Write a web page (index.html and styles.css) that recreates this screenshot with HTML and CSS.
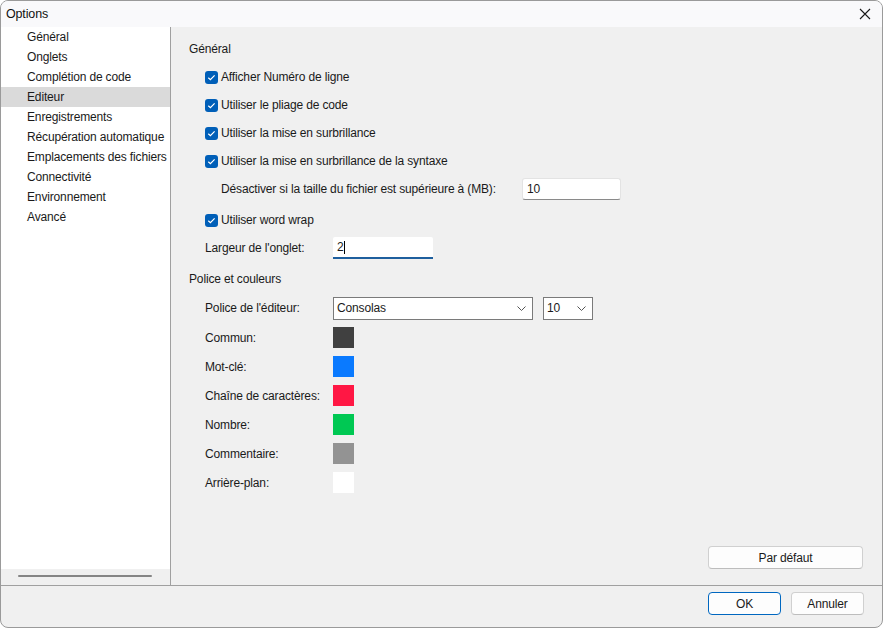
FILE: index.html
```html
<!DOCTYPE html>
<html lang="fr">
<head>
<meta charset="utf-8">
<title>Options</title>
<link rel="stylesheet" href="styles.css">
</head>
<body>
<div class="window">
  <div class="titlebar">
    <span class="title">Options</span>
    <svg class="close" width="12" height="12" viewBox="0 0 12 12"><path d="M1 1 L11 11 M11 1 L1 11" stroke="#1a1a1a" stroke-width="1.1" fill="none"/></svg>
  </div>
  <div class="main">
    <div class="sidebar">
      <ul class="nav">
        <li>Général</li>
        <li>Onglets</li>
        <li>Complétion de code</li>
        <li class="active">Editeur</li>
        <li>Enregistrements</li>
        <li>Récupération automatique</li>
        <li>Emplacements des fichiers</li>
        <li>Connectivité</li>
        <li>Environnement</li>
        <li>Avancé</li>
      </ul>
      <div class="hscroll"><div class="thumb"></div></div>
    </div>
    <div class="content">
      <div class="heading first">Général</div>
      <div class="row check"><span class="cb"><svg viewBox="0 0 13 13" width="13" height="13"><path d="M3.3 6.7 L5.4 8.7 L9.6 4.4" stroke="#fff" stroke-width="1.2" fill="none"/></svg></span>Afficher Numéro de ligne</div>
      <div class="row check"><span class="cb"><svg viewBox="0 0 13 13" width="13" height="13"><path d="M3.3 6.7 L5.4 8.7 L9.6 4.4" stroke="#fff" stroke-width="1.2" fill="none"/></svg></span>Utiliser le pliage de code</div>
      <div class="row check"><span class="cb"><svg viewBox="0 0 13 13" width="13" height="13"><path d="M3.3 6.7 L5.4 8.7 L9.6 4.4" stroke="#fff" stroke-width="1.2" fill="none"/></svg></span>Utiliser la mise en surbrillance</div>
      <div class="row check"><span class="cb"><svg viewBox="0 0 13 13" width="13" height="13"><path d="M3.3 6.7 L5.4 8.7 L9.6 4.4" stroke="#fff" stroke-width="1.2" fill="none"/></svg></span>Utiliser la mise en surbrillance de la syntaxe</div>
      <div class="row sub">
        <span class="sublabel">Désactiver si la taille du fichier est supérieure à (MB):</span>
        <span class="input size-input">10</span>
      </div>
      <div class="row check gap3"><span class="cb"><svg viewBox="0 0 13 13" width="13" height="13"><path d="M3.3 6.7 L5.4 8.7 L9.6 4.4" stroke="#fff" stroke-width="1.2" fill="none"/></svg></span>Utiliser word wrap</div>
      <div class="row field">
        <span class="label">Largeur de l'onglet:</span>
        <span class="input tab-input focused">2<span class="caret"></span></span>
      </div>
      <div class="heading second">Police et couleurs</div>
      <div class="row field font-row">
        <span class="label">Police de l'éditeur:</span>
        <span class="select font-select">Consolas<svg class="chev" width="9" height="5" viewBox="0 0 9 5"><path d="M0.5 0.5 L4.5 4.5 L8.5 0.5" stroke="#555" stroke-width="1" fill="none"/></svg></span>
        <span class="select size-select">10<svg class="chev" width="9" height="5" viewBox="0 0 9 5"><path d="M0.5 0.5 L4.5 4.5 L8.5 0.5" stroke="#555" stroke-width="1" fill="none"/></svg></span>
      </div>
      <div class="row color"><span class="label">Commun:</span><span class="swatch c-common"></span></div>
      <div class="row color"><span class="label">Mot-clé:</span><span class="swatch c-keyword"></span></div>
      <div class="row color"><span class="label">Chaîne de caractères:</span><span class="swatch c-string"></span></div>
      <div class="row color"><span class="label">Nombre:</span><span class="swatch c-number"></span></div>
      <div class="row color"><span class="label">Commentaire:</span><span class="swatch c-comment"></span></div>
      <div class="row color"><span class="label">Arrière-plan:</span><span class="swatch c-bg"></span></div>
      <div class="defaults"><button class="btn wide">Par défaut</button></div>
    </div>
  </div>
  <div class="footer">
    <button class="btn primary">OK</button>
    <button class="btn">Annuler</button>
  </div>
</div>
</body>
</html>
```
FILE: styles.css
```css
* { box-sizing: border-box; }
html, body { margin: 0; padding: 0; background: #ffffff; }
body {
  font-family: "Liberation Sans", Arial, sans-serif;
  font-size: 12px;
  letter-spacing: -0.15px;
  color: #1a1a1a;
}
.window {
  width: 883px;
  height: 628px;
  border: 1px solid #9a9a9a;
  border-radius: 8px;
  overflow: hidden;
  display: flex;
  flex-direction: column;
  background: #f0f0f0;
}
.titlebar {
  height: 26px;
  background: #f9f9fb;
  display: flex;
  align-items: center;
  justify-content: space-between;
  padding: 0 11px 0 5px;
  flex: none;
}
.title { font-size: 12.5px; color: #111; }
.close { display: block; }
.main {
  flex: 1;
  display: flex;
  min-height: 0;
  border-bottom: 1px solid #a0a0a0;
}
.sidebar {
  width: 170px;
  flex: none;
  border-right: 1px solid #a0a0a0;
  background: #ffffff;
  display: flex;
  flex-direction: column;
}
.nav {
  list-style: none;
  margin: 0;
  padding: 0;
  flex: 1;
}
.nav li {
  height: 20px;
  line-height: 20px;
  padding-left: 26px;
  white-space: nowrap;
  overflow: hidden;
}
.nav li.active { background: #dadada; }
.hscroll {
  height: 16px;
  background: #f0f0f0;
  padding: 6px 0 0 17px;
}
.thumb {
  width: 134px;
  height: 2px;
  background: #858585;
  border-radius: 1px;
}
.content {
  flex: 1;
  display: flex;
  flex-direction: column;
  padding: 7px 19px 16px 18px;
}
.heading {
  height: 29px;
  display: flex;
  align-items: center;
}
.heading.second { height: 28px; margin-top: 3px; }
.row {
  height: 28px;
  display: flex;
  align-items: center;
  padding-left: 16px;
}
.gap3 { margin-top: 3px; }
.cb {
  width: 13px;
  height: 13px;
  border-radius: 3px;
  background: #005fb8;
  margin-right: 3px;
  display: flex;
}
.sub { padding-left: 32px; }
.sublabel { width: 301px; }
.input {
  background: #ffffff;
  height: 22px;
  display: flex;
  align-items: center;
  padding-left: 4px;
  border: 1px solid #e3e3e3;
  border-bottom-color: #8a8a8a;
  border-radius: 3px;
}
.size-input { width: 99px; }
.tab-input { width: 100px; }
.tab-input.focused {
  border: none;
  border-bottom: 2px solid #1e5f9e;
  border-radius: 2px 2px 0 0;
}
.caret {
  display: inline-block;
  width: 1px;
  height: 13px;
  background: #000;
  margin-left: 0;
}
.label { width: 128px; flex: none; }
.font-row { margin-top: 1px; margin-bottom: 1px; }
.select {
  height: 23px;
  background: #ffffff;
  border: 1px solid #7a7a7a;
  display: flex;
  align-items: center;
  justify-content: space-between;
  padding: 0 6px 0 3px;
}
.font-select { width: 200px; }
.size-select { width: 50px; margin-left: 10px; }
.chev { display: block; }
.color { height: 29px; }
.swatch { width: 21px; height: 21px; display: block; }
.c-common { background: #404040; }
.c-keyword { background: #0a7aff; }
.c-string { background: #ff1744; }
.c-number { background: #00c853; }
.c-comment { background: #939393; }
.c-bg { background: #ffffff; }
.defaults {
  margin-top: auto;
  display: flex;
  justify-content: flex-end;
}
.btn {
  font-family: "Liberation Sans", Arial, sans-serif;
  font-size: 12px;
  letter-spacing: -0.15px;
  color: #1a1a1a;
  height: 23px;
  width: 73px;
  background: #fdfdfd;
  border: 1px solid #d0d0d0;
  border-bottom-color: #bdbdbd;
  border-radius: 4px;
  padding: 0;
}
.btn.wide { width: 155px; }
.btn.primary { border-color: #0067c0; }
.footer {
  height: 41px;
  flex: none;
  display: flex;
  justify-content: flex-end;
  align-items: flex-start;
  gap: 10px;
  padding: 6px 18px 0 0;
}
```
